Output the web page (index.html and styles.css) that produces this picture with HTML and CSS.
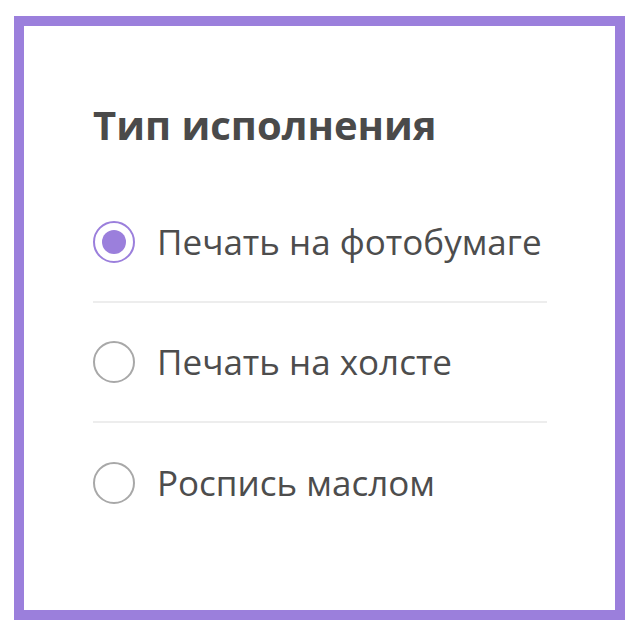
FILE: index.html
```html
<!DOCTYPE html>
<html lang="ru">
<head>
<meta charset="utf-8">
<link rel="stylesheet" href="styles.css">
</head>
<body>
<div class="card">
  <h2 class="title">Тип исполнения</h2>
  <ul class="options">
    <li class="option">
      <span class="radio checked"></span>
      <span class="label">Печать на фотобумаге</span>
    </li>
    <li class="option">
      <span class="radio"></span>
      <span class="label">Печать на холсте</span>
    </li>
    <li class="option">
      <span class="radio"></span>
      <span class="label">Роспись маслом</span>
    </li>
  </ul>
</div>
</body>
</html>
```
FILE: styles.css
```css
html, body {
  margin: 0;
  padding: 0;
  background: #ffffff;
}
body {
  padding: 16px 15px 20px 14px;
  font-family: "Open Sans", "Noto Sans", sans-serif;
}
.card {
  box-sizing: border-box;
  width: 611px;
  height: 604px;
  border: 10px solid #9b7fdc;
  background: #fff;
  padding: 76px 68px 0 69px;
}
.title {
  margin: 0 0 35px 0;
  font-size: 40px;
  font-weight: 700;
  line-height: 46px;
  color: #4a4a4a;
}
.options {
  list-style: none;
  margin: 0;
  padding: 0;
}
.option {
  box-sizing: border-box;
  display: flex;
  align-items: center;
  gap: 22px;
  height: 120px;
  border-bottom: 2px solid #ededed;
}
.option:last-child {
  border-bottom: none;
}
.radio {
  box-sizing: border-box;
  flex: 0 0 auto;
  width: 42px;
  height: 42px;
  border-radius: 50%;
  border: 2px solid #a8a8a8;
  display: flex;
  align-items: center;
  justify-content: center;
}
.radio.checked {
  border-color: #9b7fdc;
}
.radio.checked::after {
  content: "";
  width: 24px;
  height: 24px;
  border-radius: 50%;
  background: #9b7fdc;
}
.label {
  font-size: 35px;
  color: #4d4d4d;
  line-height: 42px;
}
```
